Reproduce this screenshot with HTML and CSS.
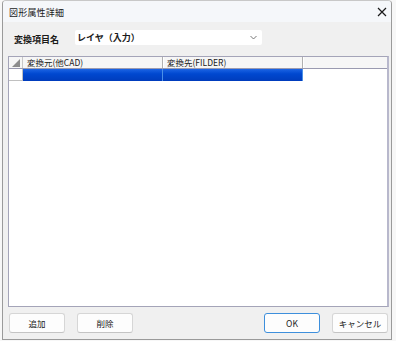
FILE: index.html
```html
<!DOCTYPE html>
<html lang="ja">
<head>
<meta charset="utf-8">
<title>図形属性詳細</title>
<link rel="stylesheet" href="styles.css">
</head>
<body>
<div class="window">
  <div class="titlebar">
    <span class="title">図形属性詳細</span>
    <svg class="close" width="10" height="10" viewBox="0 0 10 10"><path d="M1 1 L9 9 M9 1 L1 9" stroke="#1a1a1a" stroke-width="1.2" fill="none"/></svg>
  </div>
  <div class="content">
    <div class="field-row">
      <span class="label">変換項目名</span>
      <div class="combo">
        <span class="combo-text">レイヤ（入力）</span>
        <svg class="chevron" width="7" height="5" viewBox="0 0 7 5"><path d="M0.5 1 L3.5 4 L6.5 1" stroke="#6a6a6a" stroke-width="0.9" fill="none"/></svg>
      </div>
    </div>
    <div class="grid">
      <div class="grid-header">
        <div class="corner"><svg width="8" height="8" viewBox="0 0 8 8"><path d="M8 0 L8 8 L0 8 Z" fill="#8c8c8c"/></svg></div>
        <div class="hcol">変換元(他CAD)</div>
        <div class="hcol">変換先(FILDER)</div>
        <div class="hfill"></div>
      </div>
      <div class="grid-row">
        <div class="rowhead"></div>
        <div class="cell sel"></div>
        <div class="cell sel"></div>
      </div>
    </div>
    <div class="buttons">
      <div class="group">
        <button class="btn">追加</button>
        <button class="btn">削除</button>
      </div>
      <div class="group">
        <button class="btn default">OK</button>
        <button class="btn">キャンセル</button>
      </div>
    </div>
  </div>
</div>
</body>
</html>
```
FILE: styles.css
```css
* { box-sizing: border-box; }
html, body { margin: 0; padding: 0; background: #f7f7f7; }
body {
  font-family: "Noto Sans CJK JP", "Noto Sans", sans-serif;
  font-size: 9px;
  color: #1a1a1a;
}
.window {
  margin-left: 2px;
  width: 390px;
  height: 340px;
  border: 1px solid #9a9a9a;
  border-top-color: #c8c8c8;
  border-radius: 4px 4px 0 0;
  background: #f0f0f0;
  display: flex;
  flex-direction: column;
  overflow: hidden;
}
.titlebar {
  height: 21px;
  flex: none;
  background: #f5f7fa;
  display: flex;
  align-items: center;
  justify-content: space-between;
  padding: 1px 4px 0 6px;
}
.title { font-size: 9px; letter-spacing: 0.2px; }
.close { display: block; }
.content {
  flex: 1;
  display: flex;
  flex-direction: column;
  padding: 0 2px 0 5px;
}
.field-row {
  display: flex;
  align-items: center;
  margin-top: 8px;
  height: 15px;
}
.label {
  width: 67px;
  padding-left: 6px;
  font-size: 9px;
  font-weight: bold;
  margin-top: 4px;
}
.combo {
  width: 187px;
  height: 15px;
  background: #fff;
  border-radius: 2px;
  display: flex;
  align-items: center;
  justify-content: space-between;
  padding: 0 5px 0 2px;
}
.combo-text { font-size: 9px; font-weight: bold; }
.chevron { display: block; }
.grid {
  margin-top: 11px;
  height: 251px;
  background: #fff;
  border: 1px solid #a4a4b8;
  border-right-width: 2px;
  border-right-color: #b8b8cc;
  display: flex;
  flex-direction: column;
}
.grid-header {
  display: flex;
  height: 12px;
  background: #f6f6f6;
  border-bottom: 1px solid #9a9ab0;
}
.corner {
  width: 14px;
  border-right: 1px solid #c8c8c8;
  display: flex;
  align-items: flex-end;
  justify-content: flex-end;
  padding: 0 2px 1px 0;
}
.corner svg { display: block; }
.hcol {
  width: 140px;
  border-right: 1px solid #b0b0b0;
  box-shadow: 1px 0 0 #fff;
  padding-left: 4px;
  font-size: 8.5px;
  line-height: 11px;
  white-space: nowrap;
  overflow: hidden;
}
.hfill { flex: 1; }
.grid-row {
  display: flex;
  height: 12px;
}
.rowhead {
  width: 14px;
  background: #fff;
  border-right: 1px solid #c0c0c0;
  border-bottom: 1px solid #c0c0c0;
}
.cell { width: 140px; }
.cell.sel {
  background: linear-gradient(#1c64e4, #0048d0 40%, #003cbc);
  border-right: 1px solid #4a90e8;
}
.buttons {
  display: flex;
  justify-content: space-between;
  margin-top: 6px;
  padding: 0 1px;
}
.group { display: flex; gap: 12px; }
.btn {
  width: 56px;
  height: 20px;
  background: #fdfdfd;
  border: 1px solid #d6d6d6;
  border-bottom-color: #c4c4c4;
  border-radius: 3px;
  font-family: "Noto Sans CJK JP", "Noto Sans", sans-serif;
  font-size: 8.5px;
  color: #1a1a1a;
  padding: 0;
}
.btn.default {
  border: 1px solid #3d8fdc;
}
```
